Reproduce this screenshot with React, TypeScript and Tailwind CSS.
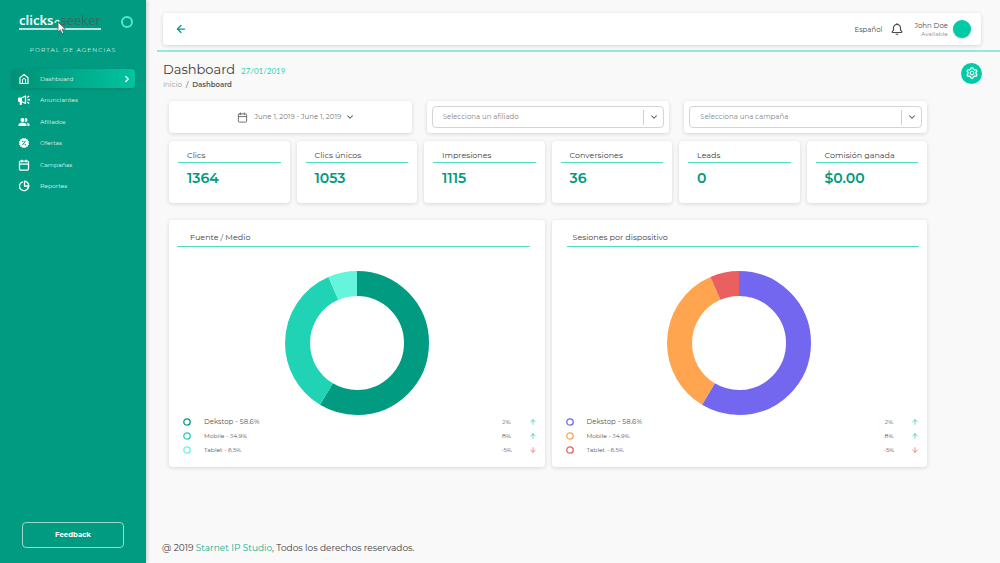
import React from "react";
import { ArrowDown, ArrowLeft, ArrowUp, Calendar, ChevronDown, ChevronRight } from "lucide-react";
import { BiBell, BiCog, BiSolidOffer } from "react-icons/bi";
import { MdPeopleAlt } from "react-icons/md";

type IconProps = { className?: string };

function HomeIcon({ className }: IconProps) {
  return (
    <svg viewBox="0 0 24 24" fill="none" stroke="currentColor" strokeWidth="2.400" strokeLinejoin="round" className={className} aria-hidden="true">
      <path d="M4 21V9.500L12 3l8 6.500V21Z" />
      <path d="M9 20.500V14a3 3 0 0 1 6 0v6.500" strokeWidth="2" />
    </svg>
  );
}

function MegaphoneIcon({ className }: IconProps) {
  return (
    <svg viewBox="0 0 24 24" fill="none" stroke="currentColor" className={className} aria-hidden="true">
      <path d="M1 8h6v7H1z" fill="currentColor" strokeWidth="2" strokeLinejoin="round" />
      <path d="M7 8 15 4v15L7 15" strokeWidth="2.600" strokeLinejoin="round" />
      <path d="M4 15v6h3v-6" fill="currentColor" strokeWidth="1.500" />
      <path d="m18.500 7 4-3M19 11.500h5M18.500 16l4 3" strokeWidth="2.600" />
    </svg>
  );
}

function CalendarIcon({ className }: IconProps) {
  return <Calendar className={className} strokeWidth={2.5} aria-hidden="true" />;
}

function PieIcon({ className }: IconProps) {
  return (
    <svg viewBox="0 0 24 24" fill="none" stroke="currentColor" strokeWidth="2.600" strokeLinejoin="round" className={className} aria-hidden="true">
      <path d="M9 3.800A9 9 0 1 0 20.500 15" strokeLinecap="round" />
      <path d="M13 2.500V12h8.500A9 9 0 0 0 13 2.500Z" />
      <path d="M21.500 12a9.500 9.500 0 0 1-2.500 6" />
    </svg>
  );
}

type NavItem = { label: string; icon: React.ComponentType<IconProps>; active?: boolean };

const navItems: NavItem[] = [
  { label: "Dashboard", icon: HomeIcon, active: true },
  { label: "Anunciantes", icon: MegaphoneIcon },
  { label: "Afiliados", icon: MdPeopleAlt },
  { label: "Ofertas", icon: BiSolidOffer },
  { label: "Campañas", icon: CalendarIcon },
  { label: "Reportes", icon: PieIcon },
];

const stats = [
  { label: "Clics", value: "1364" },
  { label: "Clics únicos", value: "1053" },
  { label: "Impresiones", value: "1115" },
  { label: "Conversiones", value: "36" },
  { label: "Leads", value: "0" },
  { label: "Comisión ganada", value: "$0.00" },
];

type Slice = { name: string; share: number; change: number; color: string };

const sources: Slice[] = [
  { name: "Dekstop", share: 58.6, change: 2, color: "#009b80" },
  { name: "Mobile", share: 34.9, change: 8, color: "#20d3b5" },
  { name: "Tablet", share: 6.5, change: -5, color: "#65f5dc" },
];

const devices: Slice[] = [
  { name: "Dekstop", share: 58.6, change: 2, color: "#7367f0" },
  { name: "Mobile", share: 34.9, change: 8, color: "#ffa44f" },
  { name: "Tablet", share: 6.5, change: -5, color: "#ea5f5f" },
];

const card = "rounded-[4px] bg-white shadow-[0_1px_4px_rgba(0,0,0,0.14)]";

function Logo() {
  return (
    <a
      href="#"
      className="relative flex w-[82px] items-baseline justify-between border-b-2 border-[#b5e5dc] font-['Noto_Sans','Open_Sans',sans-serif] text-[13px] leading-[15px]"
    >
      <span className="font-semibold text-white">clicks</span>
      <span className="text-[#45645f]">seeker</span>
      <svg viewBox="0 0 14 16" className="absolute left-[35px] top-[5px] h-4 w-3.5" aria-hidden="true">
        <path d="M1 5a2.500 2.500 0 0 1 4.500-1.500" fill="none" stroke="#d5f3ed" strokeWidth="1.300" />
        <path d="M4 4v10l2.300-2.100 1.700 3.600 1.700-.8L8 11.200l3.300-.2Z" fill="#fff" stroke="#4b5c59" strokeWidth=".8" />
      </svg>
    </a>
  );
}

function Sidebar() {
  return (
    <aside className="flex w-[146px] shrink-0 flex-col bg-[#009b80] text-white shadow-[1px_0_4px_rgba(0,0,0,0.2)]">
      <div className="flex items-center justify-between pl-[19px] pr-[13px] pt-[13px]">
        <Logo />
        <button type="button" aria-label="Contraer menú" className="size-3 rounded-full border-2 border-[#4eeacb]" />
      </div>
      <p className="mt-4 text-center text-[6px] leading-2 tracking-[1px] text-[#d6f1ec]">PORTAL DE AGENCIAS</p>
      <nav className="mt-[15px] flex h-[127px] flex-col justify-between pl-3 pr-[11px]">
        {navItems.map(({ label, icon: Icon, active }) => (
          <a
            key={label}
            href="#"
            aria-current={active ? "page" : undefined}
            className={
              active
                ? "flex h-[19px] items-center rounded-[3px] bg-linear-to-r from-[#009176] to-[#00c4a0] pl-1.5 pr-[3px] shadow-[0_1px_3px_rgba(0,0,0,0.15)]"
                : "flex h-[19px] items-center pl-1.5 pr-[3px]"
            }
          >
            <Icon className="size-3 shrink-0" />
            <span className="ml-2.5 flex-1 text-[6px] leading-3 text-[#e0f5f1]">{label}</span>
            {active && <ChevronRight className="size-2.5" strokeWidth={3} aria-hidden="true" />}
          </a>
        ))}
      </nav>
      <button
        type="button"
        className="mx-[22px] mb-[15px] mt-auto h-[26px] rounded-[4px] border border-[#9bd9ce] text-[7px] font-bold"
      >
        Feedback
      </button>
    </aside>
  );
}

function Header() {
  return (
    <header className={`${card} ml-[17px] mr-[19px] mt-[13px] flex h-8 items-center pl-3 pr-2.5 text-[#4a4a4a]`}>
      <button type="button" aria-label="Volver" className="text-[#009b80]">
        <ArrowLeft className="size-3" strokeWidth={2.5} />
      </button>
      <button type="button" className="ml-auto pt-0.5 text-[7px] leading-3">
        Español
      </button>
      <button type="button" aria-label="Notificaciones" className="ml-2">
        <BiBell className="size-3.5" />
      </button>
      <div className="ml-2.5 pt-0.5 text-right">
        <p className="text-[7px] leading-2">John Doe</p>
        <p className="text-[6px] leading-2 text-[#8c8c8c]">Available</p>
      </div>
      <span className="ml-[5px] size-[18px] rounded-full bg-[#00cba6] shadow-[0_1px_2px_rgba(0,0,0,0.2)]" />
    </header>
  );
}

function Picker({ label }: { label: string }) {
  return (
    <div className={`${card} p-[5px]`}>
      <div className="grid h-[22px] grid-cols-1 items-center rounded-[4px] border border-[#d4d4d4]">
        <select
          aria-label={label}
          className="col-start-1 row-start-1 h-5 w-full appearance-none bg-transparent pl-2.5 pr-6 text-[7px] leading-5 text-[#858585] outline-none"
        >
          <option>{label}</option>
        </select>
        <span className="pointer-events-none col-start-1 row-start-1 flex h-[15px] w-5 items-center justify-center justify-self-end border-l border-[#d0d0d0]">
          <ChevronDown className="size-2.5 text-[#555]" strokeWidth={2.5} aria-hidden="true" />
        </span>
      </div>
    </div>
  );
}

function Donut({ slices, title }: { slices: Slice[]; title: string }) {
  return (
    <svg viewBox="0 0 144 144" role="img" aria-label={title} className="mx-auto mt-6 size-36">
      <g transform="rotate(-90 72 72)" fill="none" strokeWidth="25">
        {slices.map((slice, i) => {
          const start = slices.slice(0, i).reduce((sum, s) => sum + s.share, 0);
          return (
            <circle
              key={slice.name}
              cx="72"
              cy="72"
              r="59.5"
              pathLength={100}
              stroke={slice.color}
              strokeDasharray={`${slice.share} ${100 - slice.share}`}
              strokeDashoffset={-start}
            />
          );
        })}
      </g>
    </svg>
  );
}

function ChartCard({ title, slices, headingClass }: { title: string; slices: Slice[]; headingClass: string }) {
  return (
    <section className={`${card} pb-2.5 pt-[11px]`}>
      <h2 className={`${headingClass} flex h-4 items-start border-b border-[#4fdcc2] text-[8px] leading-3 text-[#3c3c3c]`}>
        {title}
      </h2>
      <Donut slices={slices} title={title} />
      <ul className="pl-3.5 pr-2 text-[#555]">
        {slices.map((slice, i) => (
          <li key={slice.name} className="flex h-3.5 items-center">
            <svg viewBox="0 0 8 8" className="size-2" aria-hidden="true">
              <circle cx="4" cy="4" r="3.200" fill="none" stroke={slice.color} strokeWidth="1.300" />
            </svg>
            <span className={i === 0 ? "ml-[13px] text-[7px] leading-3" : "ml-[13px] text-[6px] leading-3"}>
              {slice.name} - {slice.share}%
            </span>
            <span className="ml-auto w-5 text-center text-[6px] leading-3">{slice.change}%</span>
            {slice.change > 0 ? (
              <ArrowUp className="ml-3 size-2 text-[#28c76f]" aria-label="Sube" />
            ) : (
              <ArrowDown className="ml-3 size-2 text-[#ea5455]" aria-label="Baja" />
            )}
          </li>
        ))}
      </ul>
    </section>
  );
}

export default function App() {
  return (
    <div className="flex min-h-screen bg-[#f9f9f9] font-['Montserrat','Inter',sans-serif] text-[#3c3c3c]">
      <Sidebar />
      <div className="flex min-w-0 flex-1 flex-col">
        <Header />
        <hr className="ml-[11px] mt-[5px] border-t-2 border-[#9be5d8]" />
        <main>
          <div className="flex items-center justify-between pl-[17px] pr-[18px] pt-[9px]">
            <div>
              <div className="flex items-baseline gap-1.5">
                <h1 className="text-[13px] leading-4">Dashboard</h1>
                <time className="font-[Lato,sans-serif] text-[8px] leading-4 text-[#1fd3b3]">27/01/2019</time>
              </div>
              <nav aria-label="Ruta" className="flex gap-1 text-[7px] leading-3">
                <a href="#" className="text-[#999]">
                  Inicio
                </a>
                <span>/</span>
                <span className="font-semibold text-[#555]">Dashboard</span>
              </nav>
            </div>
            <button
              type="button"
              aria-label="Configuración"
              className="mb-1.5 flex size-[21px] items-center justify-center rounded-full bg-[#00cba6] text-white"
            >
              <BiCog className="size-3.5" />
            </button>
          </div>

          <div className="ml-[23px] mr-[73px] mt-2.5">
            <div className="grid grid-cols-3 gap-[15px]">
              <button type="button" className={`${card} flex items-center justify-center pl-3 text-[7px] text-[#777]`}>
                <Calendar className="mr-1.5 size-[11px] text-[#666]" aria-hidden="true" />
                June 1, 2019 - June 1, 2019
                <ChevronDown className="ml-1 size-2.5 text-[#555]" strokeWidth={2.5} aria-hidden="true" />
              </button>
              <Picker label="Selecciona un afiliado" />
              <Picker label="Selecciona una campaña" />
            </div>

            <dl className="mt-2 grid grid-cols-6 gap-[7px]">
              {stats.map((stat) => (
                <div key={stat.label} className={`${card} h-[62px] px-[9px] pt-2`}>
                  <dt className="h-3.5 border-b border-[#4fdcc2] pl-[9px] text-[8px] leading-3">{stat.label}</dt>
                  <dd className="mt-[5px] pl-[9px] text-[14px] font-semibold leading-5 text-[#009b80]">{stat.value}</dd>
                </div>
              ))}
            </dl>

            <div className="mt-[17px] grid grid-cols-2 gap-[7px]">
              <ChartCard title="Fuente / Medio" slices={sources} headingClass="ml-2 mr-[15px] pl-[13px]" />
              <ChartCard title="Sesiones por dispositivo" slices={devices} headingClass="ml-[15px] mr-2 pl-1.5" />
            </div>
          </div>
        </main>
        <footer className="mt-auto px-4 pb-2 pt-6 text-[9px] leading-[14px]">
          @ 2019{" "}
          <a href="#" className="text-[#1aab90]">
            Starnet IP Studio
          </a>
          , Todos los derechos reservados.
        </footer>
      </div>
    </div>
  );
}
